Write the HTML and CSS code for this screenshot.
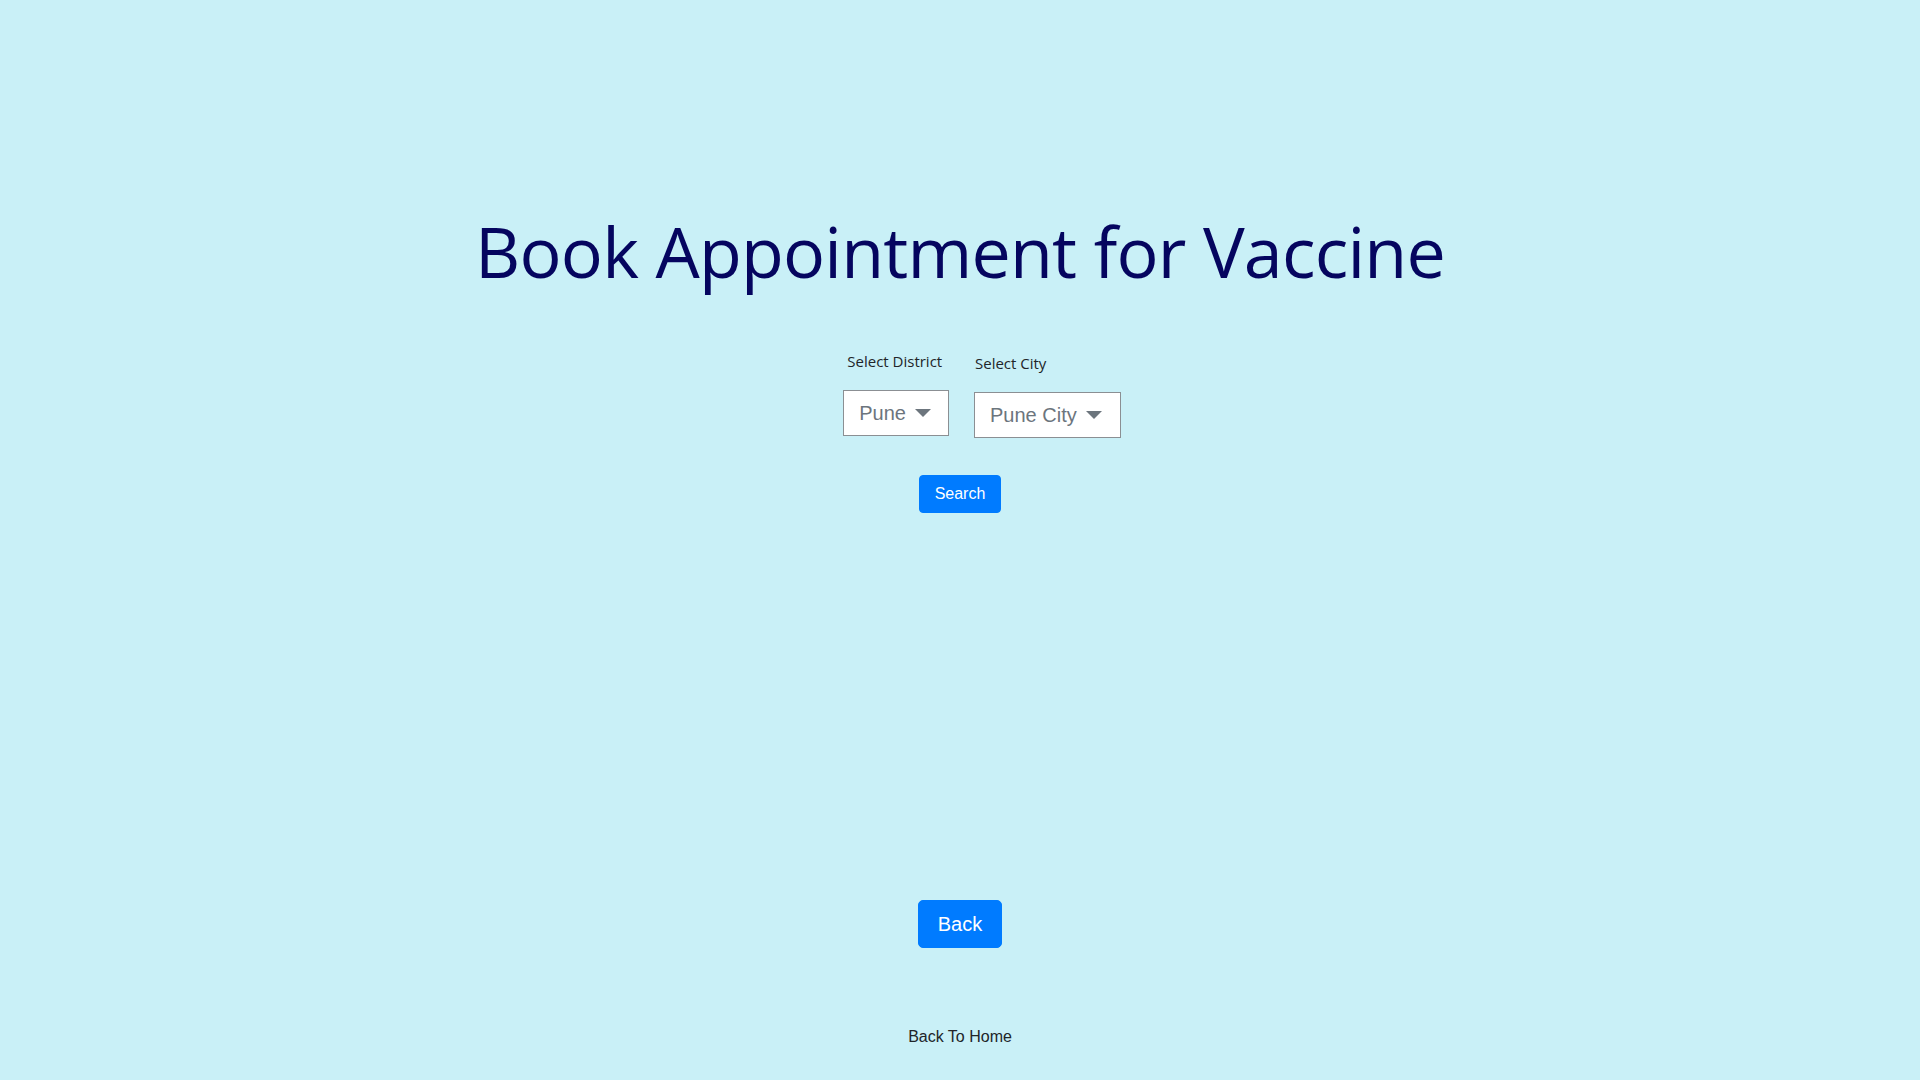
FILE: index.html
```html
<!DOCTYPE html>
<html lang="en">
<head>
<meta charset="utf-8">
<title>Book Appointment for Vaccine</title>
<link rel="stylesheet" href="styles.css">
</head>
<body>
<main class="page">
  <h1 class="title">Book Appointment for Vaccine</h1>
  <div class="filters">
    <div class="field">
      <label class="field-label">Select District</label>
      <div class="dropdown dropdown-district">
        <span class="dropdown-value">Pune</span>
        <span class="caret"></span>
      </div>
    </div>
    <div class="field field-city">
      <label class="field-label field-label-city">Select City</label>
      <div class="dropdown">
        <span class="dropdown-value">Pune City</span>
        <span class="caret"></span>
      </div>
    </div>
  </div>
  <div class="search-row">
    <button class="btn btn-search" type="button">Search</button>
  </div>
  <div class="back-row">
    <button class="btn btn-back" type="button">Back</button>
  </div>
  <div class="home-row">
    <a class="home-link" href="#">Back To Home</a>
  </div>
</main>
</body>
</html>
```
FILE: styles.css
```css
html, body {
  margin: 0;
  padding: 0;
}
body {
  background: #c9f0f7;
  min-height: 1080px;
  font-family: "Liberation Sans", Arial, sans-serif;
}
.page {
  padding-top: 209px;
  display: flex;
  flex-direction: column;
  align-items: center;
}
.title {
  margin: 0;
  font-family: "Open Sans", "Noto Sans", sans-serif;
  font-weight: 400;
  font-size: 70px;
  line-height: 84px;
  letter-spacing: -0.8px;
  color: #05055f;
  text-align: center;
}
.filters {
  margin-top: 58px;
  display: flex;
  gap: 25px;
  margin-left: 44px;
}
.field {
  display: flex;
  flex-direction: column;
}
.field-city {
  margin-top: 2px;
}
.field-label {
  font-family: "Open Sans", "Noto Sans", sans-serif;
  font-size: 15px;
  line-height: 20px;
  color: #212529;
  padding-left: 4px;
  margin-bottom: 19px;
}
.field-label-city {
  padding-left: 1px;
}
.dropdown {
  box-sizing: border-box;
  height: 46px;
  display: flex;
  align-items: center;
  padding: 0 18px 0 15px;
  gap: 9px;
  background: #fff;
  border: 1px solid #8b8f93;
  color: #6c757d;
  font-size: 20px;
}
.dropdown-district {
  padding-right: 17px;
}
.caret {
  width: 0;
  height: 0;
  border-left: 8px solid transparent;
  border-right: 8px solid transparent;
  border-top: 8px solid #6c757d;
}
.search-row {
  margin-top: 37px;
}
.btn {
  font-family: "Liberation Sans", Arial, sans-serif;
  color: #fff;
  background: #007bff;
  border: 1px solid #007bff;
  cursor: pointer;
}
.btn-search {
  font-size: 16px;
  line-height: 24px;
  padding: 6px 15px;
  border-radius: 4px;
}
.back-row {
  margin-top: 387px;
}
.btn-back {
  font-size: 20px;
  line-height: 30px;
  padding: 8px 19px;
  border-radius: 5px;
}
.home-row {
  margin-top: 77px;
}
.home-link {
  font-size: 16px;
  line-height: 24px;
  color: #212529;
  text-decoration: none;
}
```
